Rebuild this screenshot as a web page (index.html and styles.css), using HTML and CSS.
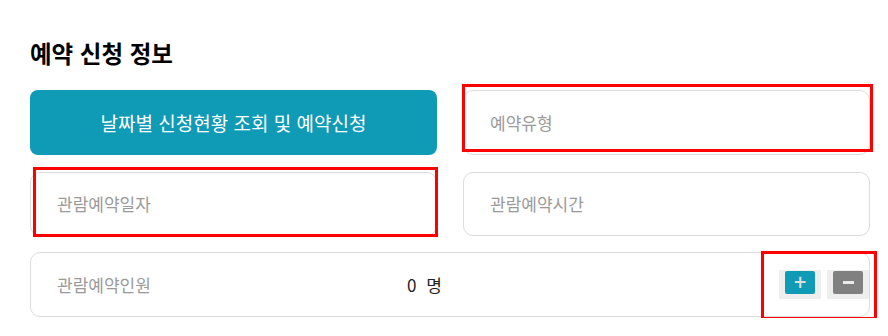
FILE: index.html
```html
<!DOCTYPE html>
<html lang="ko">
<head>
<meta charset="utf-8">
<title>예약 신청 정보</title>
<link rel="stylesheet" href="styles.css">
</head>
<body>
<main class="page">
  <h2 class="title">예약 신청 정보</h2>
  <div class="form">
    <button class="cal-btn" type="button">날짜별 신청현황 조회 및 예약신청</button>
    <div class="field"><span class="ph">예약유형</span></div>
    <div class="field"><span class="ph">관람예약일자</span></div>
    <div class="field"><span class="ph">관람예약시간</span></div>
    <div class="field field-wide">
      <span class="ph ph-fixed">관람예약인원</span>
      <span class="count">0 명</span>
      <div class="steppers">
        <span class="step-wrap"><span class="step step-plus">+</span></span>
        <span class="step-wrap"><span class="step step-minus"><span class="minus-bar"></span></span></span>
      </div>
    </div>
    <span class="mark mark-type"></span>
    <span class="mark mark-date"></span>
    <span class="mark mark-count"></span>
  </div>
</main>
</body>
</html>
```

FILE: styles.css
```css
* { box-sizing: border-box; }
html, body { margin: 0; padding: 0; background: #fff; }
body {
  font-family: "Noto Sans CJK KR", "Noto Sans", "Liberation Sans", sans-serif;
  color: #222;
}
.page {
  width: 888px;
  padding: 36px 18px 0 30px;
}
.title {
  margin: 0;
  font-size: 23.5px;
  line-height: 34px;
  font-weight: 700;
  color: #000;
}
.form {
  position: relative;
  margin-top: 20px;
  width: 840px;
  display: grid;
  grid-template-columns: 407px 407px;
  column-gap: 26px;
  grid-template-rows: 65px 64px 65px;
  row-gap: 17px;
}
.form > .field:nth-child(5) { margin-top: -1px; }
.cal-btn {
  border: 0;
  margin: 0;
  border-radius: 8px;
  background: #0f9ab5;
  color: #fff;
  font-family: inherit;
  font-size: 19px;
  font-weight: 400;
  display: flex;
  align-items: center;
  justify-content: center;
  padding: 0;
}
.field {
  border: 1px solid #dcdcdc;
  border-radius: 10px;
  display: flex;
  align-items: center;
  padding-left: 26px;
  overflow: hidden;
  background: #fff;
}
.field-wide {
  grid-column: 1 / span 2;
  padding-left: 26px;
  height: 65px;
}
.ph {
  font-size: 17px;
  color: #9a9a9a;
  line-height: 22px;
}
.ph-fixed {
  width: 350px;
  flex-shrink: 0;
}
.count {
  font-size: 17px;
  color: #222;
  line-height: 22px;
  word-spacing: 5px;
}
.steppers {
  margin-left: auto;
  display: flex;
  gap: 6px;
  align-items: center;
}
.step-wrap {
  width: 42px;
  height: 29px;
  background: #eeeeee;
  display: flex;
  justify-content: center;
  align-items: flex-start;
  padding-top: 1px;
}
.step {
  width: 30px;
  height: 23px;
  border-radius: 2px;
  display: flex;
  align-items: center;
  justify-content: center;
  color: #ddd;
  font-family: "DejaVu Sans", sans-serif;
  font-weight: 700;
  font-size: 17px;
  line-height: 1;
}
.step-plus { background: #0f9ab5; }
.step-minus { background: #808080; }
.minus-bar {
  width: 11px;
  height: 3px;
  background: #eaeaea;
}
.mark {
  position: absolute;
  border: 3px solid #ff0000;
  pointer-events: none;
}
.mark-type { left: 432px; top: -6px; width: 411px; height: 68px; }
.mark-date { left: 3px; top: 77px; width: 405px; height: 70px; }
.mark-count { left: 731px; top: 161px; width: 116px; height: 69px; }
```
